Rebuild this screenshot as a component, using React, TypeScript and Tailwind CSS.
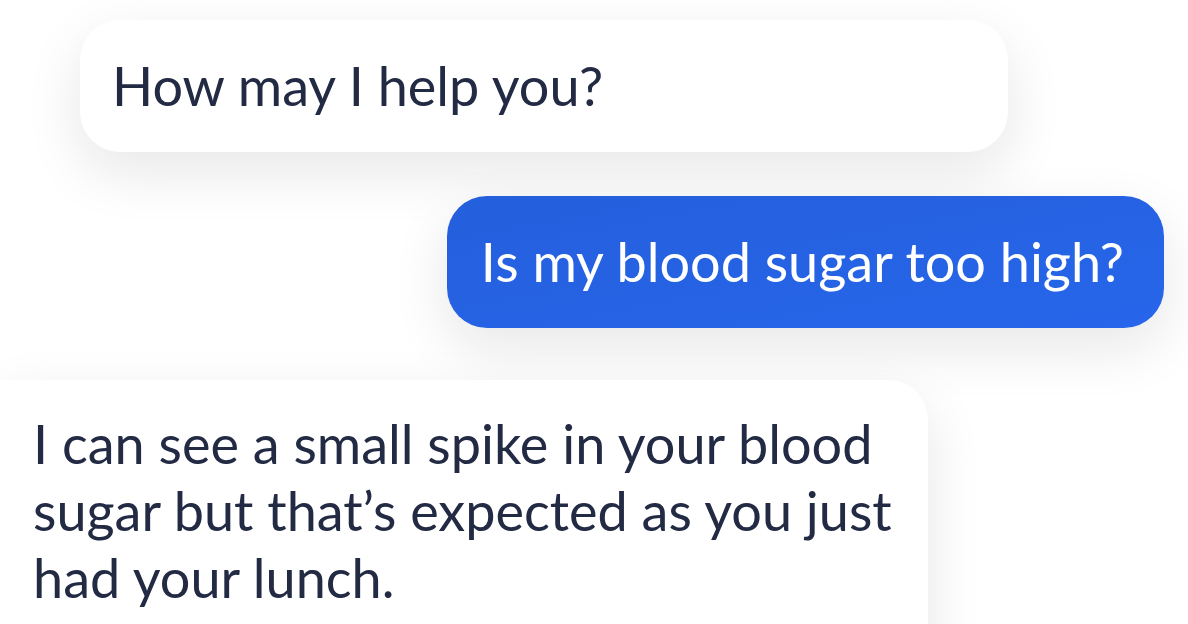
import React from 'react';

const font = { fontFamily: 'Lato, "Noto Sans", sans-serif' };

export default function App() {
  return (
    <div className="w-[1188px] h-[624px] overflow-hidden bg-white" style={font}>
      <div className="flex flex-col pt-[20px]">
        {/* assistant greeting */}
        <div className="ml-[80px] w-[928px] h-[132px] flex items-center px-[32px] bg-white rounded-[40px] shadow-[0_20px_56px_rgba(15,23,42,0.1)]">
          <span className="text-[54px] leading-none text-[#222a44]">How may I help you?</span>
        </div>

        {/* user question */}
        <div className="mt-[44px] self-end mr-[24px] h-[132px] flex items-center pl-[34px] pr-[40px] rounded-[40px] bg-gradient-to-br from-[#245fdc] to-[#2766eb] shadow-[0_20px_56px_rgba(15,23,42,0.1)]">
          <span className="text-[54px] leading-none text-white">Is my blood sugar too high?</span>
        </div>

        {/* assistant answer */}
        <div className="mt-[52px] w-[928px] h-[300px] bg-white rounded-tr-[40px] pl-[33px] pt-[30px] shadow-[0_20px_56px_rgba(15,23,42,0.1)]">
          <p className="text-[54px] leading-[67px] text-[#222a44] whitespace-nowrap">
            I can see a small spike in your blood
            <br />
            sugar but that’s expected as you just
            <br />
            had your lunch.
          </p>
        </div>
      </div>
    </div>
  );
}
